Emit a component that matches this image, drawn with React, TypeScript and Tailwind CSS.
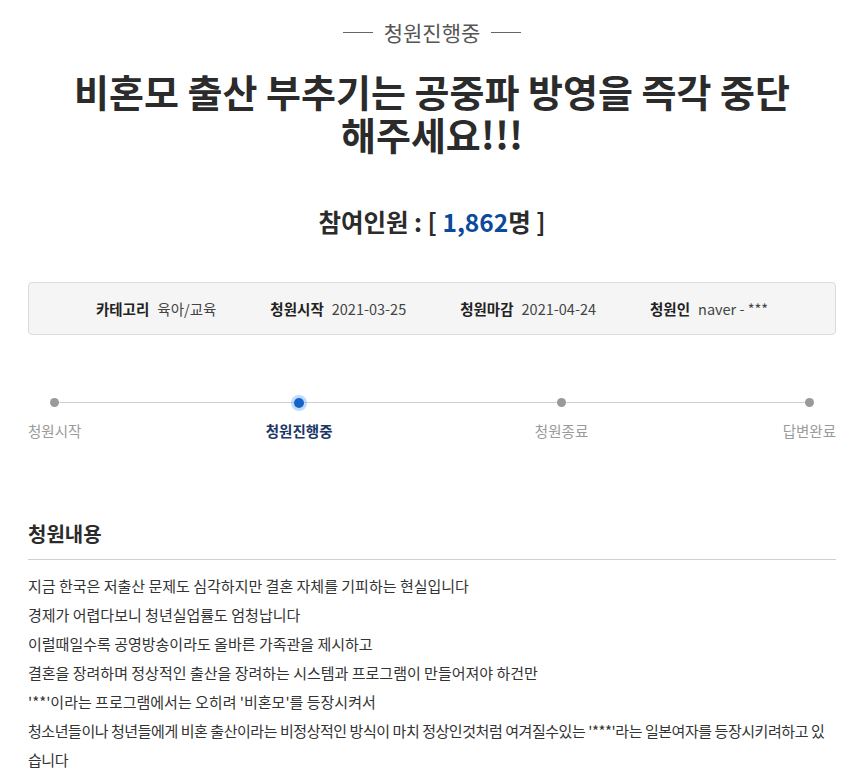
const FONT = "font-['Noto_Sans_CJK_KR','Noto_Sans',sans-serif]";

const steps = [
  { label: "청원시작", active: false, shift: "" },
  { label: "청원진행중", active: true, shift: "mr-[18px]" },
  { label: "청원종료", active: false, shift: "mr-[10px]" },
  { label: "답변완료", active: false, shift: "" },
];

const info = [
  { k: "카테고리", v: "육아/교육" },
  { k: "청원시작", v: "2021-03-25" },
  { k: "청원마감", v: "2021-04-24" },
  { k: "청원인", v: "naver - ***" },
];

const body = [
  "지금 한국은 저출산 문제도 심각하지만 결혼 자체를 기피하는 현실입니다",
  "경제가 어렵다보니 청년실업률도 엄청납니다",
  "이럴때일수록 공영방송이라도 올바른 가족관을 제시하고",
  "결혼을 장려하며 정상적인 출산을 장려하는 시스템과 프로그램이 만들어져야 하건만",
  "'**'이라는 프로그램에서는 오히려 '비혼모'를 등장시켜서",
];

export default function App() {
  return (
    <div className={`${FONT} min-h-screen bg-white text-[#333]`}>
      <div className="mx-auto w-[808px] pt-[19px]">
        {/* status + title */}
        <div className="flex items-center justify-center gap-[11px] text-[21px] leading-[26px] text-[#555]">
          <span className="h-px w-[30px] bg-[#666]" />
          <span>청원진행중</span>
          <span className="h-px w-[30px] bg-[#666]" />
        </div>
        <h1 className="mt-[24px] text-center text-[38px] font-bold leading-[43px] text-[#2b2b2b]">
          비혼모 출산 부추기는 공중파 방영을 즉각 중단
          <br />
          해주세요!!!
        </h1>
        <div className="mt-[51px] text-center text-[24.5px] font-bold leading-[32px] text-[#2b2b2b]">
          참여인원 : [ <span className="text-[#0b4a9a]">1,862</span>명 ]
        </div>

        {/* info box */}
        <div className="mt-[44px] flex h-[53px] items-center justify-center gap-[54px] rounded-[4px] border border-[#dcdcdc] bg-[#f5f5f5] text-[14.5px]">
          {info.map((i) => (
            <div key={i.k} className="flex items-center gap-[8px]">
              <span className="font-bold text-[#222]">{i.k}</span>
              <span className="text-[#444]">{i.v}</span>
            </div>
          ))}
        </div>

        {/* progress */}
        <div className="relative mt-[62px] flex justify-between">
          <div className="absolute left-[25px] right-[27px] top-[5px] h-px bg-[#cfcfcf]" />
          {steps.map((s) => (
            <div key={s.label} className={`relative flex flex-col items-center ${s.shift}`}>
              <div className="flex h-[11px] items-center">
                {s.active ? (
                  <span className="h-[10px] w-[10px] rounded-full bg-[#1565c8] shadow-[0_0_0_3px_rgba(96,165,250,0.4)]" />
                ) : (
                  <span className="h-[9px] w-[9px] rounded-full bg-[#9a9a9a]" />
                )}
              </div>
              <span
                className={`mt-[13px] text-[14.5px] leading-[20px] ${
                  s.active ? "font-bold text-[#1c3766]" : "text-[#9a9a9a]"
                }`}
              >
                {s.label}
              </span>
            </div>
          ))}
        </div>

        {/* content */}
        <h2 className="mt-[79px] text-[20px] font-bold leading-[28px] text-[#2b2b2b]">청원내용</h2>
        <div className="mt-[11px] h-px bg-[#cfcfcf]" />
        <div className="mt-[11px] text-[15px] leading-[29px] text-[#333]">
          {body.map((line, i) => (
            <p key={i}>{line}</p>
          ))}
          <p className="tracking-[-0.45px]">
            청소년들이나 청년들에게 비혼 출산이라는 비정상적인 방식이 마치 정상인것처럼 여겨질수있는 '***'라는 일본여자를 등장시키려하고 있
            <br />
            습니다
          </p>
        </div>
      </div>
    </div>
  );
}
